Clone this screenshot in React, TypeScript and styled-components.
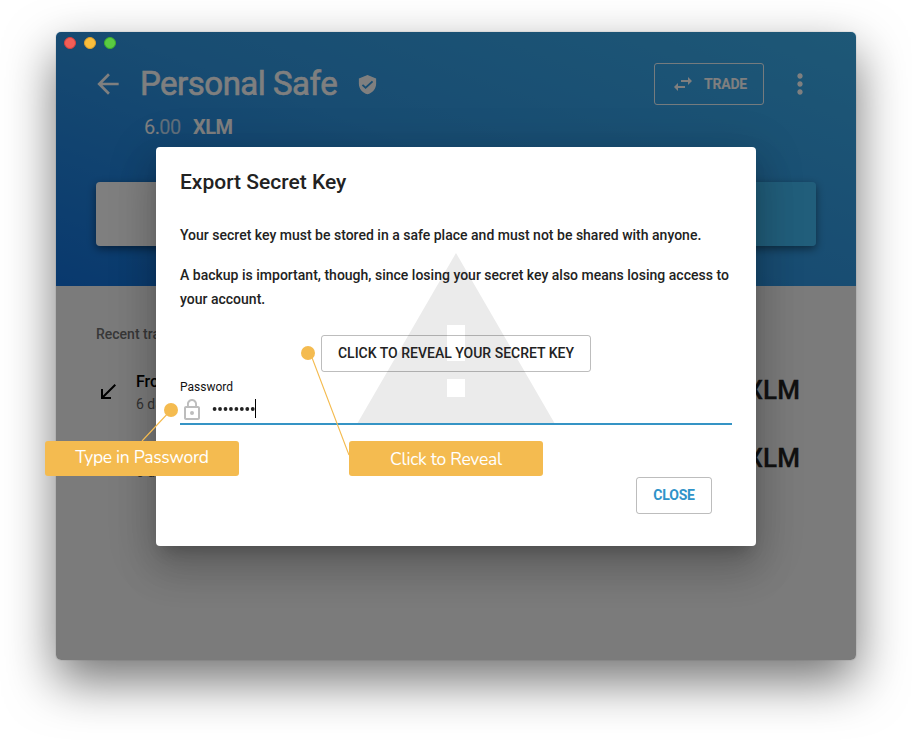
import React from "react";
import styled, { createGlobalStyle } from "styled-components";

const GlobalStyle = createGlobalStyle`
  *, *::before, *::after { box-sizing: border-box; }
  body {
    margin: 0;
    background: #fff;
    font-family: Roboto, "Liberation Sans", sans-serif;
    color: #222;
    overflow: hidden;
  }
  p, h1, h2 { margin: 0; }
  button { font-family: inherit; background: none; margin: 0; }
  svg { display: block; flex: none; }
`;

const Stage = styled.div`
  position: relative;
  width: 912px;
  height: 740px;
  padding: 32px 56px 80px;
  overflow: hidden;
`;

const AppWindow = styled.main`
  position: relative;
  width: 800px;
  height: 628px;
  border-radius: 5px;
  box-shadow: 0 0 1px rgba(0, 0, 0, 0.5), 0 21px 50px rgba(0, 0, 0, 0.55);
`;

const WindowContent = styled.div`
  height: 100%;
  border-radius: 5px;
  overflow: hidden;
  background: #f7f7f7;
`;

const Header = styled.header`
  height: 254px;
  padding: 31px 40px 0 36px;
  color: #fff;
  background: linear-gradient(200deg, #3cb0ee 0%, #3098e4 50%, #1272dc 100%);
`;

const TitleRow = styled.div`
  display: flex;
  align-items: center;
  height: 42px;
`;

const AccountName = styled.h1`
  width: 198px;
  margin-left: 16px;
  font-size: 33px;
  font-weight: 400;
  line-height: 40px;
  letter-spacing: -0.5px;
  -webkit-text-stroke: 0.6px currentColor;
  white-space: nowrap;
`;

const Verified = styled.span`
  margin-left: 18px;
`;

const TradeButton = styled.button`
  display: flex;
  align-items: center;
  gap: 9px;
  width: 110px;
  height: 42px;
  margin-left: auto;
  padding: 0 0 0 16px;
  border: 1px solid rgba(255, 255, 255, 0.9);
  border-radius: 3px;
  color: #fff;
  font-size: 14px;
  font-weight: 700;
  letter-spacing: -0.2px;
`;

const MenuButton = styled.span`
  display: flex;
  width: 32px;
  margin-left: 20px;
`;

const Balance = styled.div`
  display: flex;
  align-items: baseline;
  margin: 10px 0 0 52px;
  font-size: 20px;
  line-height: 24px;
  letter-spacing: -0.6px;
`;

const Cents = styled.span`
  opacity: 0.72;
`;

const Unit = styled.span`
  margin-left: 12.5px;
  font-weight: 700;
`;

const ActionBar = styled.div`
  display: flex;
  height: 64px;
  margin: 43px 0 0 4px;
  border-radius: 4px;
  overflow: hidden;
  box-shadow: 0 3px 9px rgba(0, 0, 0, 0.45);
`;

const ActionPane = styled.div<{ $tone: string }>`
  flex: 1;
  background: ${(p) => p.$tone};
`;

const Transactions = styled.section`
  padding: 36px 56px 0 40px;
`;

const SectionLabel = styled.h2`
  height: 24px;
  font-size: 14px;
  line-height: 24px;
  font-weight: 500;
  color: #707070;
`;

const TransactionRow = styled.div`
  display: flex;
  align-items: center;
  height: 68px;
`;

const TransactionList = styled.div`
  margin-top: 10px;
  color: #000;
`;

const Direction = styled.span`
  padding-top: 4px;
`;

const TransactionText = styled.div`
  margin-left: 16px;
  padding-top: 7px;
`;

const Counterparty = styled.p`
  font-size: 16px;
  line-height: 22px;
  font-weight: 500;
`;

const Age = styled.p`
  font-size: 14px;
  line-height: 23px;
  color: #666;
`;

const Amount = styled.span`
  margin-left: auto;
  font-size: 26px;
  font-weight: 500;
  letter-spacing: 0.1px;
  color: #222;
  -webkit-text-stroke: 0.3px currentColor;
`;

const Backdrop = styled.div`
  position: absolute;
  inset: 0;
  display: flex;
  align-items: flex-start;
  justify-content: center;
  padding-top: 115px;
  border-radius: 5px;
  overflow: hidden;
  background: rgba(0, 0, 0, 0.5);
`;

const WindowControls = styled.div`
  position: absolute;
  top: 5px;
  left: 8px;
  display: flex;
  gap: 8px;
`;

const Light = styled.span<{ $fill: string; $edge: string }>`
  width: 12px;
  height: 12px;
  border-radius: 50%;
  background: ${(p) => p.$fill};
  border: 1px solid ${(p) => p.$edge};
`;

const Dialog = styled.section`
  position: relative;
  width: 600px;
  height: 399px;
  padding: 20px 24px 0;
  border-radius: 4px;
  background: #fff;
  box-shadow: 0 11px 15px -7px rgba(0, 0, 0, 0.2), 0 24px 38px 3px rgba(0, 0, 0, 0.14),
    0 9px 46px 8px rgba(0, 0, 0, 0.12);
`;

const Watermark = styled.svg`
  position: absolute;
  top: 87.5px;
  left: 192px;
  fill: #ebebeb;
`;

const DialogBody = styled.div`
  position: relative;
  display: flex;
  flex-direction: column;
`;

const DialogTitle = styled.h2`
  font-size: 21px;
  line-height: 31px;
  font-weight: 500;
`;

const Paragraph = styled.p<{ $top: number }>`
  margin-top: ${(p) => p.$top}px;
  font-size: 14px;
  line-height: 24px;
  font-weight: 500;
  letter-spacing: 0.005px;
  white-space: nowrap;
`;

const OutlinedButton = styled.button<{ $width: number; $accent?: boolean }>`
  width: ${(p) => p.$width}px;
  height: 37px;
  padding: 0;
  border: 1px solid rgba(0, 0, 0, 0.26);
  border-radius: 3px;
  font-size: 14px;
  line-height: 35px;
  font-weight: ${(p) => (p.$accent ? 700 : 500)};
  letter-spacing: ${(p) => (p.$accent ? "-0.15px" : "0")};
  color: ${(p) => (p.$accent ? "#2f93c9" : "#222")};
  white-space: nowrap;
`;

const RevealSlot = styled.div`
  display: flex;
  justify-content: center;
  margin-top: 24px;
`;

const FieldLabel = styled.label`
  margin-top: 6px;
  font-size: 12px;
  line-height: 18px;
  color: #111;
`;

const PasswordField = styled.div`
  display: flex;
  align-items: center;
  height: 29px;
  border-bottom: 2px solid #3594c5;
`;

const Dots = styled.svg`
  margin: 0 0 2px 8px;
`;

const Caret = styled.span`
  width: 1px;
  height: 19px;
  margin-bottom: 2px;
  background: #000;
`;

const DialogActions = styled.div`
  display: flex;
  justify-content: flex-end;
  margin: 52px 20px 0 0;
`;

const Pointers = styled.svg`
  position: absolute;
  inset: 0;
`;

const Callout = styled.div<{ $x: number; $line: number }>`
  position: absolute;
  left: ${(p) => p.$x}px;
  top: 441px;
  width: 194px;
  height: 35px;
  border-radius: 3px;
  background: #f4bb50;
  color: #fff;
  font-family: Nunito, Lato, sans-serif;
  font-size: 17.5px;
  font-weight: 400;
  line-height: ${(p) => p.$line}px;
  letter-spacing: -0.28px;
  text-align: center;
`;

const Icon = ({ d, width = 24, height = width }: { d: string; width?: number; height?: number }) => (
  <svg width={width} height={height} viewBox="0 0 24 24" preserveAspectRatio="none" fill="currentColor">
    <path d={d} />
  </svg>
);

const LockIcon = () => (
  <svg width="24" height="24" viewBox="0 0 24 24" fill="#bdbdbd">
    <path
      fillRule="evenodd"
      d="M18 8h-1V6c0-2.760-2.240-5-5-5S7 3.240 7 6v2H6c-1.100 0-2 .9-2 2v10c0 1.100.9 2 2 2h12c1.100 0 2-.9 2-2V10c0-1.100-.9-2-2-2zM8.900 6c0-1.710 1.390-3.100 3.100-3.100s3.100 1.390 3.100 3.100v2H8.900V6zM18 20H6V10h12v10z"
    />
    <circle cx="12" cy="15" r="2" />
  </svg>
);

const paths = {
  back: "M20 11H7.830l5.590-5.590L12 4l-8 8 8 8 1.410-1.410L7.830 13H20v-2z",
  verified:
    "M12 1L3 5v6c0 5.550 3.840 10.740 9 12 5.160-1.260 9-6.450 9-12V5l-9-4zm-2 16l-4-4 1.410-1.410L10 14.170l6.590-6.590L18 9l-8 8z",
  swap: "M6.990 11L3 15l3.990 4v-3H14v-2H6.990v-3zM21 9l-3.990-4v3H10v2h7.010v3L21 9z",
  more: "M12 8c1.100 0 2-.9 2-2s-.9-2-2-2-2 .9-2 2 .9 2 2 2zm0 2c-1.100 0-2 .9-2 2s.9 2 2 2 2-.9 2-2-.9-2-2-2zm0 6c-1.100 0-2 .9-2 2s.9 2 2 2 2-.9 2-2-.9-2-2-2z",
  received: "M20 5.410L18.590 4 7 15.590V9H5v10h10v-2H8.410z",
  warning: "M1 21h22L12 2 1 21zm12-3h-2v-2h2v2zm0-4h-2v-4h2v4z",
};

const Transaction = () => (
  <TransactionRow>
    <Direction>
      <Icon d={paths.received} />
    </Direction>
    <TransactionText>
      <Counterparty>From</Counterparty>
      <Age>6 days</Age>
    </TransactionText>
    <Amount>XLM</Amount>
  </TransactionRow>
);

export default function App() {
  return (
    <Stage>
      <GlobalStyle />
      <AppWindow>
        <WindowContent>
          <Header>
            <TitleRow>
              <Icon d={paths.back} width={32} />
              <AccountName>Personal Safe</AccountName>
              <Verified>
                <Icon d={paths.verified} width={23} height={21} />
              </Verified>
              <TradeButton>
                <Icon d={paths.swap} />
                TRADE
              </TradeButton>
              <MenuButton>
                <Icon d={paths.more} width={32} />
              </MenuButton>
            </TitleRow>
            <Balance>
              6.<Cents>00</Cents>
              <Unit>XLM</Unit>
            </Balance>
            <ActionBar>
              <ActionPane $tone="#ffffff" />
              <ActionPane $tone="#43bcf6" />
            </ActionBar>
          </Header>
          <Transactions>
            <SectionLabel>Recent transactions</SectionLabel>
            <TransactionList>
              <Transaction />
              <Transaction />
            </TransactionList>
          </Transactions>
        </WindowContent>
        <Backdrop>
          <Dialog>
            <Watermark width="216" height="216" viewBox="0 0 24 24">
              <path d={paths.warning} />
            </Watermark>
            <DialogBody>
              <DialogTitle>Export Secret Key</DialogTitle>
              <Paragraph $top={25}>
                Your secret key must be stored in a safe place and must not be shared with anyone.
              </Paragraph>
              <Paragraph $top={16}>
                A backup is important, though, since losing your secret key also means losing access to
                <br />
                your account.
              </Paragraph>
              <RevealSlot>
                <OutlinedButton $width={270}>CLICK TO REVEAL YOUR SECRET KEY</OutlinedButton>
              </RevealSlot>
              <FieldLabel>Password</FieldLabel>
              <PasswordField>
                <LockIcon />
                <Dots width="43" height="6" viewBox="0 0 43 6" fill="#222">
                  {Array.from({ length: 8 }, (_, i) => (
                    <circle key={i} cx={2.6 + i * 5.45} cy="3" r="1.9" />
                  ))}
                </Dots>
                <Caret />
              </PasswordField>
              <DialogActions>
                <OutlinedButton $width={76} $accent>
                  CLOSE
                </OutlinedButton>
              </DialogActions>
            </DialogBody>
          </Dialog>
        </Backdrop>
        <WindowControls>
          <Light $fill="#f25e57" $edge="#d9413b" />
          <Light $fill="#fabe3c" $edge="#e0a02a" />
          <Light $fill="#5acb42" $edge="#3fae2b" />
        </WindowControls>
      </AppWindow>
      <Pointers width="912" height="740" viewBox="0 0 912 740" fill="#f4bb50" stroke="#f4bb50">
        <path d="M171 410L142 441M311 355L349 455" strokeWidth="1.100" />
        <circle cx="171" cy="410" r="7" stroke="none" />
        <circle cx="308" cy="353" r="7" stroke="none" />
      </Pointers>
      <Callout $x={45} $line={33}>Type in Password</Callout>
      <Callout $x={349} $line={36}>Click to Reveal</Callout>
    </Stage>
  );
}
